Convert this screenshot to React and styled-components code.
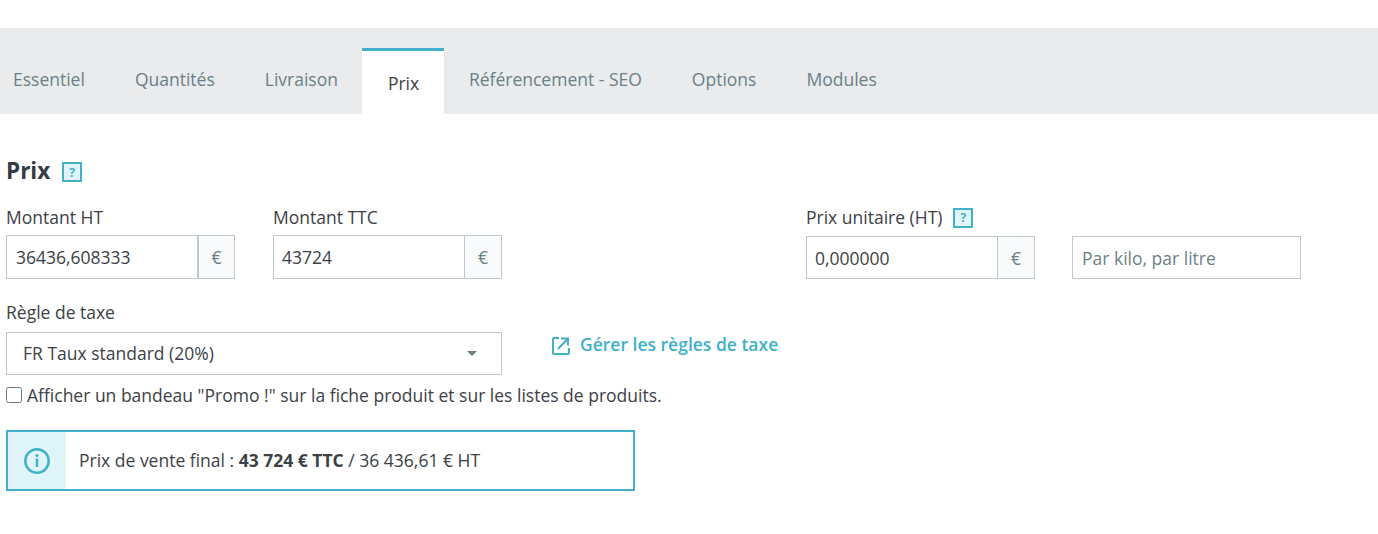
import React from "react";
import styled, { createGlobalStyle } from "styled-components";

const Global = createGlobalStyle`
  html, body { margin: 0; padding: 0; background: #fff; }
  body { font-family: "Open Sans", "Noto Sans", sans-serif; color: #3d4146; }
`;
const Page = styled.div`
  width: 1378px; height: 534px; padding-top: 28px; box-sizing: border-box; overflow: hidden;
`;
const TabBar = styled.nav`
  display: flex; align-items: flex-end; height: 86px; background: #e9ebed; padding-left: 13px;
`;
const Tab = styled.div`
  font-size: 17.5px; line-height: 24px; white-space: nowrap; color: ${p => (p.$active ? "#3d4146" : "#6c7f87")};
  ${p => p.$active
    ? `background:#fff; border-top:3px solid #40b1c8; height:66px; width:82px; box-sizing:border-box; padding:20px 0 0 26px; margin:0 25px 0 0;`
    : `height:86px; box-sizing:border-box; padding-top:39px; margin-right:50px;`}
  &:nth-child(3) { margin-right: 24px; }
`;
const Content = styled.main`padding: 43px 0 0 6px;`;
const Heading = styled.div`display: flex; align-items: center; gap: 12px; height: 28px;`;
const Title = styled.h2`margin: 0; font-size: 22.5px; line-height: 28px; font-weight: 700; color: #363a41;`;
const Help = styled.span`
  display: inline-flex; align-items: center; justify-content: center; width: 20px; height: 20px;
  box-sizing: border-box; border: 2px solid #40b1c8; background: #e0f5fa; color: #40b1c8;
  font-size: 12px; font-weight: 700; margin-top: 2px;
`;
const FieldsRow = styled.div`display: flex; margin-top: 20px;`;
const Field = styled.div`width: 229px; margin-right: ${p => p.$mr || 0}px;`;
const Label = styled.label`
  display: flex; align-items: center; gap: 11px; font-size: 17.5px; line-height: 24px; height: 24px; color: #3d4146;
`;
const InputGroup = styled.div`
  display: flex; height: ${p => p.$h || 44}px; margin-top: ${p => p.$mt || 6}px; box-sizing: border-box;
  border: 1px solid #bfc8cc; background: #fff;
`;
const Value = styled.div`
  flex: 1; padding-left: ${p => p.$pl || 9}px; font-size: 17.5px; line-height: 42px; color: ${p => p.$ph ? "#6c7f87" : "#3d4146"};
`;
const Addon = styled.div`
  width: ${p => p.$thick ? 35 : 36}px; border-left: ${p => p.$thick ? 2 : 1}px solid #bfc8cc; background: #f8fafb; color: #6c7f87; font-size: 17.5px;
  display: flex; align-items: center; justify-content: center;
`;
const TaxRow = styled.div`display: flex; margin-top: 21px; align-items: flex-start;`;
const TaxCol = styled.div`width: 496px;`;
const Select = styled.div`
  height: 43px; box-sizing: border-box; border: 1px solid #bfc8cc; margin-top: 8px; padding: 0 24px 2px 16px;
  display: flex; align-items: center; justify-content: space-between; font-size: 17.5px; color: #3d4146;
`;
const Caret = styled.span`
  width: 0; height: 0; margin-top: 2px; border-left: 5px solid transparent; border-right: 5px solid transparent;
  border-top: 5px solid #6c7f87;
`;
const ManageLink = styled.a`
  display: flex; align-items: center; gap: 10px; margin: 30px 0 0 50px; font-size: 17.5px; font-weight: 600; color: #40b1c8; line-height: 28px;
  svg { margin-top: 3px; }
`;
const CheckRow = styled.label`
  display: flex; align-items: center; gap: 5px; margin-top: 8px; font-size: 17.5px; line-height: 24px; color: #3d4146;
`;
const Check = styled.input`width: 16px; height: 16px; margin: 0; flex: none;`;
const Alert = styled.div`
  display: flex; width: 629px; height: 61px; margin-top: 23px; box-sizing: border-box; border: 2px solid #40b1c8; background: #fff;
`;
const AlertIcon = styled.div`
  width: 58px; background: #dff5f9; display: flex; align-items: center; justify-content: center;
`;
const AlertText = styled.div`
  padding-left: 13px; font-size: 17.5px; line-height: 57px; color: #3d4146;
  b { font-weight: 700; }
`;

export default function App() {
  return (
    <Page>
      <Global />
      <TabBar>
        <Tab>Essentiel</Tab>
        <Tab>Quantités</Tab>
        <Tab>Livraison</Tab>
        <Tab $active>Prix</Tab>
        <Tab>Référencement - SEO</Tab>
        <Tab>Options</Tab>
        <Tab>Modules</Tab>
      </TabBar>
      <Content>
        <Heading><Title>Prix</Title><Help>?</Help></Heading>
        <FieldsRow>
          <Field $mr={38}>
            <Label>Montant HT</Label>
            <InputGroup><Value>36436,608333</Value><Addon $thick>€</Addon></InputGroup>
          </Field>
          <Field $mr={304}>
            <Label>Montant TTC</Label>
            <InputGroup><Value $pl={8}>43724</Value><Addon>€</Addon></InputGroup>
          </Field>
          <Field $mr={37}>
            <Label>Prix unitaire (HT)<Help>?</Help></Label>
            <InputGroup $h={43} $mt={7}><Value $pl={8}>0,000000</Value><Addon>€</Addon></InputGroup>
          </Field>
          <Field>
            <Label>&nbsp;</Label>
            <InputGroup $h={43} $mt={7}><Value $ph>Par kilo, par litre</Value></InputGroup>
          </Field>
        </FieldsRow>
        <TaxRow>
          <TaxCol>
            <Label>Règle de taxe</Label>
            <Select>FR Taux standard (20%)<Caret /></Select>
          </TaxCol>
          <ManageLink>
            <svg width="18" height="18" viewBox="0 0 18 18" fill="none" stroke="#40b1c8" strokeWidth="2">
              <path d="M7 1H2a1 1 0 0 0-1 1v14a1 1 0 0 0 1 1h14a1 1 0 0 0 1-1v-5" />
              <path d="M9 1.5h7v7M16 1.5L6 12" />
            </svg>
            Gérer les règles de taxe
          </ManageLink>
        </TaxRow>
        <CheckRow><Check type="checkbox" />Afficher un bandeau "Promo !" sur la fiche produit et sur les listes de produits.</CheckRow>
        <Alert>
          <AlertIcon>
            <svg width="26" height="26" viewBox="0 0 26 26" fill="none" stroke="#40b1c8" strokeWidth="2.5">
              <circle cx="13" cy="13" r="11.7" />
              <path d="M13 10.5v8.5" />
              <circle cx="13" cy="7.5" r="1.5" fill="#40b1c8" stroke="none" />
            </svg>
          </AlertIcon>
          <AlertText>Prix de vente final : <b>43 724 € TTC</b> / 36 436,61 € HT</AlertText>
        </Alert>
      </Content>
    </Page>
  );
}
